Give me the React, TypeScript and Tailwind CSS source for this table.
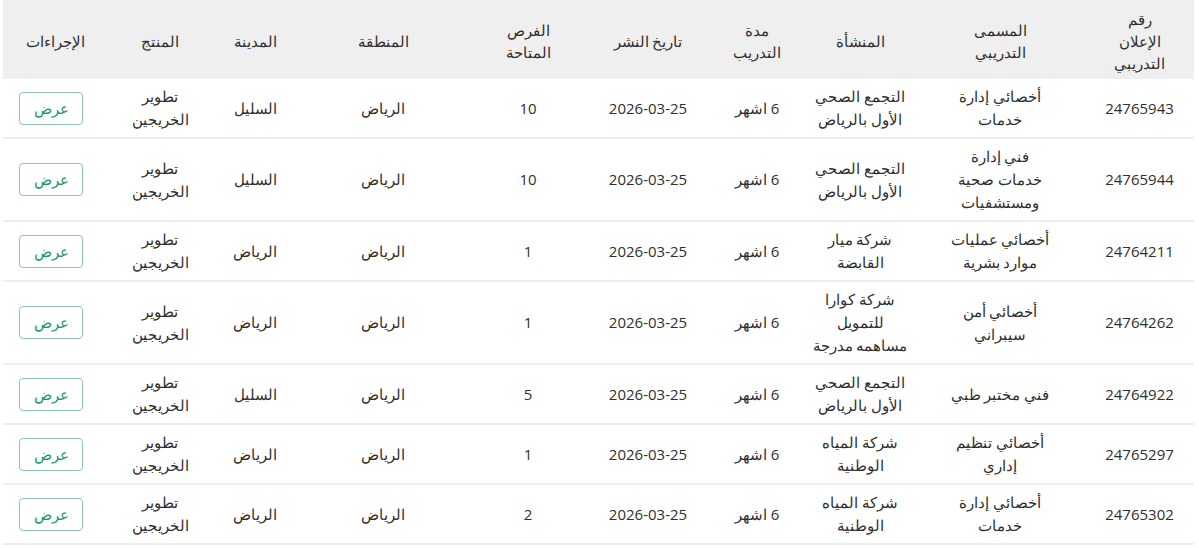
import React from 'react';

type Row = {
  id: string;
  title: string[];
  org: string[];
  duration: string;
  date: string;
  seats: string;
  region: string;
  city: string;
  product: string[];
};

const rows: Row[] = [
  { id: '24765943', title: ['أخصائي إدارة', 'خدمات'], org: ['التجمع الصحي', 'الأول بالرياض'], duration: '6 اشهر', date: '2026-03-25', seats: '10', region: 'الرياض', city: 'السليل', product: ['تطوير', 'الخريجين'] },
  { id: '24765944', title: ['فني إدارة', 'خدمات صحية', 'ومستشفيات'], org: ['التجمع الصحي', 'الأول بالرياض'], duration: '6 اشهر', date: '2026-03-25', seats: '10', region: 'الرياض', city: 'السليل', product: ['تطوير', 'الخريجين'] },
  { id: '24764211', title: ['أخصائي عمليات', 'موارد بشرية'], org: ['شركة ميار', 'القابضة'], duration: '6 اشهر', date: '2026-03-25', seats: '1', region: 'الرياض', city: 'الرياض', product: ['تطوير', 'الخريجين'] },
  { id: '24764262', title: ['أخصائي أمن', 'سيبراني'], org: ['شركة كوارا', 'للتمويل', 'مساهمه مدرجة'], duration: '6 اشهر', date: '2026-03-25', seats: '1', region: 'الرياض', city: 'الرياض', product: ['تطوير', 'الخريجين'] },
  { id: '24764922', title: ['فني مختبر طبي'], org: ['التجمع الصحي', 'الأول بالرياض'], duration: '6 اشهر', date: '2026-03-25', seats: '5', region: 'الرياض', city: 'السليل', product: ['تطوير', 'الخريجين'] },
  { id: '24765297', title: ['أخصائي تنظيم', 'إداري'], org: ['شركة المياه', 'الوطنية'], duration: '6 اشهر', date: '2026-03-25', seats: '1', region: 'الرياض', city: 'الرياض', product: ['تطوير', 'الخريجين'] },
  { id: '24765302', title: ['أخصائي إدارة', 'خدمات'], org: ['شركة المياه', 'الوطنية'], duration: '6 اشهر', date: '2026-03-25', seats: '2', region: 'الرياض', city: 'الرياض', product: ['تطوير', 'الخريجين'] },
];

const Lines = ({ lines }: { lines: string[] }) => (
  <>
    {lines.map((l, i) => (
      <span key={i} className="block whitespace-nowrap">{l}</span>
    ))}
  </>
);

export default function App() {
  return (
    <div className="bg-white pl-[3px] pr-[5px] font-['Open_Sans','Noto_Sans',sans-serif]">
      <table dir="rtl" className="w-full table-fixed border-collapse text-[15px] leading-[23px] text-[#2f2f2f]">
        <colgroup>
          <col className="w-[109px]" />
          <col className="w-[170px]" />
          <col className="w-[110px]" />
          <col className="w-[96px]" />
          <col className="w-[122px]" />
          <col className="w-[118px]" />
          <col className="w-[172px]" />
          <col className="w-[84px]" />
          <col className="w-[106px]" />
          <col className="w-[104px]" />
        </colgroup>
        <thead>
          <tr className="h-[79px] bg-[#efefef] text-center align-middle leading-[22px]">
            <th className="pt-[3px] font-normal"><Lines lines={['رقم', 'الإعلان', 'التدريبي']} /></th>
            <th className="pt-[3px] font-normal"><Lines lines={['المسمى', 'التدريبي']} /></th>
            <th className="pt-[3px] font-normal">المنشأة</th>
            <th className="pt-[3px] font-normal"><Lines lines={['مدة', 'التدريب']} /></th>
            <th className="pt-[3px] font-normal">تاريخ النشر</th>
            <th className="pt-[3px] font-normal"><Lines lines={['الفرص', 'المتاحة']} /></th>
            <th className="pt-[3px] font-normal">المنطقة</th>
            <th className="pt-[3px] font-normal">المدينة</th>
            <th className="pt-[3px] font-normal">المنتج</th>
            <th className="pt-[3px] font-normal">الإجراءات</th>
          </tr>
        </thead>
        <tbody>
          {rows.map((r) => (
            <tr key={r.id} className="border-b-2 border-[#eeeeee] text-center align-middle">
              <td className="py-[6px]">{r.id}</td>
              <td className="py-[6px]"><Lines lines={r.title} /></td>
              <td className="py-[6px]"><Lines lines={r.org} /></td>
              <td className="py-[6px]">{r.duration}</td>
              <td className="py-[6px]">{r.date}</td>
              <td className="py-[6px]">{r.seats}</td>
              <td className="py-[6px]">{r.region}</td>
              <td className="py-[6px]">{r.city}</td>
              <td className="py-[6px]"><Lines lines={r.product} /></td>
              <td className="py-[6px] pr-[8px]">
                <button className="h-[33px] w-[64px] rounded border border-[#8cc7b0] bg-white text-[15px] font-medium text-[#1b9a62]">
                  عرض
                </button>
              </td>
            </tr>
          ))}
        </tbody>
      </table>
    </div>
  );
}
